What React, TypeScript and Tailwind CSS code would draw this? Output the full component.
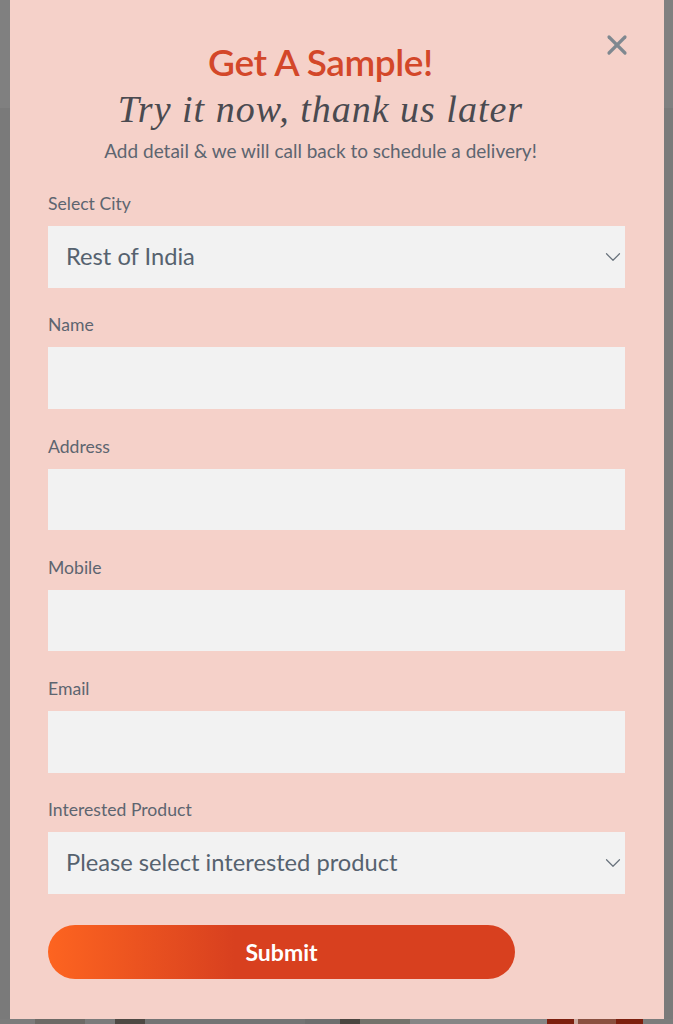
import { X, ChevronDown } from "lucide-react";

const rows = [
  { label: "Select City", value: "Rest of India", select: true },
  { label: "Name" },
  { label: "Address" },
  { label: "Mobile" },
  { label: "Email" },
  { label: "Interested Product", value: "Please select interested product", select: true },
];

// page behind the overlay, only a sliver of it shows under the modal
const behind = [
  { w: "w-[35px]", bg: "bg-[#7c7c7c]" },
  { w: "w-[50px]", bg: "bg-[#6d6a66]" },
  { w: "w-[30px]", bg: "bg-[#7b7b7b]" },
  { w: "w-[30px]", bg: "bg-[#4e4944]" },
  { w: "w-[160px]", bg: "bg-[#747474]" },
  { w: "w-[35px]", bg: "bg-[#6e6e6e]" },
  { w: "w-[20px]", bg: "bg-[#4a4540]" },
  { w: "w-[50px]", bg: "bg-[#74726b]" },
  { w: "w-[137px]", bg: "bg-[#868686]" },
  { w: "w-[27px]", bg: "bg-[#7d1f0e]" },
  { w: "w-[4px]", bg: "bg-[#c9a9a0]" },
  { w: "w-[38px]", bg: "bg-[#8a5040]" },
  { w: "w-[27px]", bg: "bg-[#7d1f0e]" },
  { w: "w-[30px]", bg: "bg-[#7c7c7c]" },
];

export default function App() {
  return (
    <div className="h-[1024px] overflow-hidden bg-[linear-gradient(#808080_108px,#7a7a7a_108px)] font-['Lato',sans-serif]">
      <div className="pl-[10px] pr-[9px]">
        <div className="relative h-[1019px] bg-[#f5d1c9] pl-[38px] pr-[39px] pt-[40px]">
          <button className="absolute right-[31px] top-[29px] text-[#7f8890]">
            <X size={32} strokeWidth={2.4} />
          </button>

          <div className="pr-[32px] text-center">
            <h2 className="text-[37px] font-semibold leading-[44px] tracking-[-0.4px] text-[#d34729]">Get A Sample!</h2>
            <p className="mt-[1px] font-['Liberation_Serif',serif] text-[38px] italic leading-[48px] tracking-[1px] text-[#4a4a50]">
              Try it now, thank us later
            </p>
            <p className="mt-[6px] text-[19px] leading-[24px] text-[#5d6570]">
              Add detail &amp; we will call back to schedule a delivery!
            </p>
          </div>

          <form className="mt-[29px] flex flex-col gap-[25.8px]">
            {rows.map((row) => (
              <div key={row.label}>
                <label className="block text-[17.6px] leading-[24px] text-[#5d6570]">{row.label}</label>
                <div className="mt-[10px] flex h-[61.5px] items-center justify-between bg-[#f2f2f2] pl-[18px] text-[23.7px] text-[#56626f]">
                  <span>{row.value}</span>
                  {row.select && (
                    <ChevronDown size={26} strokeWidth={1.1} className="-mr-[1px] text-[#68727c]" />
                  )}
                </div>
              </div>
            ))}
            <button
              type="button"
              className="mt-[5px] h-[54px] w-[467px] rounded-full bg-gradient-to-r from-[#fd6420] via-[#d8401f] via-40% to-[#d8401f] text-[23px] font-bold text-white"
            >
              Submit
            </button>
          </form>
        </div>
      </div>
      <div className="flex h-[5px]">
        {behind.map((b, i) => (
          <div key={i} className={`${b.w} ${b.bg}`} />
        ))}
      </div>
    </div>
  );
}
